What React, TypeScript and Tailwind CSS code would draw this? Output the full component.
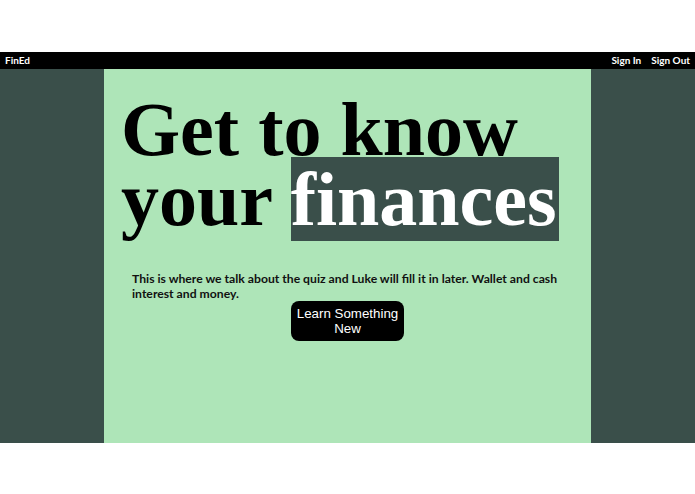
export default function App() {
  return (
    <div className="min-h-[494px] bg-white flex flex-col" style={{ fontFamily: "Lato, 'Noto Sans', sans-serif" }}>
      <div className="h-[52px]" />
      <nav className="h-[17px] bg-black flex items-center justify-between px-[5px] text-[10px] font-bold text-white">
        <span>FinEd</span>
        <div className="flex gap-[10px]">
          <a>Sign In</a>
          <a>Sign Out</a>
        </div>
      </nav>
      <main className="h-[374px] bg-[#3a4f4a] flex justify-center">
        <section className="w-[487px] bg-[#aee5b8] flex flex-col">
          <h1
            className="mt-[25px] pl-[17px] text-[76px] leading-[70px] font-bold text-black"
            style={{ fontFamily: "'Liberation Serif', 'Times New Roman', serif" }}
          >
            Get to know
            <br />
            your <span className="bg-[#3a4f4a] text-white pr-[2px]">finances</span>
          </h1>
          <p className="mt-[37px] px-[28px] text-[12.2px] leading-[15px] font-bold text-[#111]">
            This is where we talk about the quiz and Luke will fill it in later. Wallet and cash interest and money.
          </p>
          <div className="flex justify-center">
            <button
              className="w-[113px] h-[40px] rounded-[8px] bg-black text-white text-[13.33px] leading-[15px]"
              style={{ fontFamily: "'Liberation Sans', Arial, sans-serif" }}
            >
              Learn Something New
            </button>
          </div>
        </section>
      </main>
    </div>
  );
}
